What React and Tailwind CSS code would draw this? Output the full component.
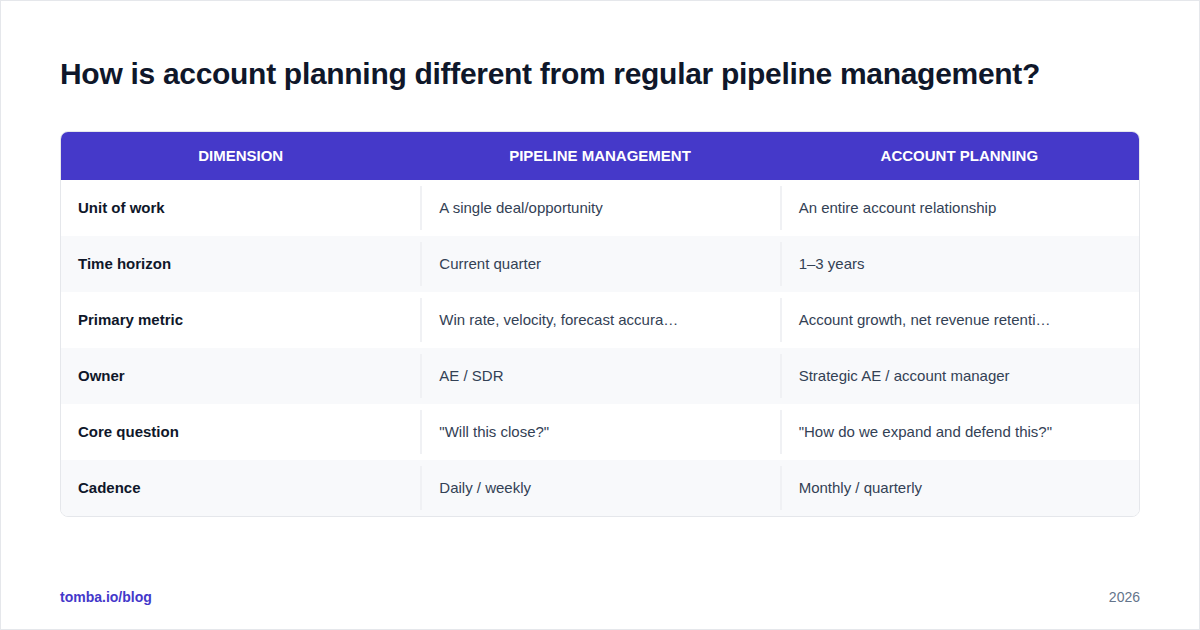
const rows = [
  ['Unit of work', 'A single deal/opportunity', 'An entire account relationship'],
  ['Time horizon', 'Current quarter', '1–3 years'],
  ['Primary metric', 'Win rate, velocity, forecast accura…', 'Account growth, net revenue retenti…'],
  ['Owner', 'AE / SDR', 'Strategic AE / account manager'],
  ['Core question', '"Will this close?"', '"How do we expand and defend this?"'],
  ['Cadence', 'Daily / weekly', 'Monthly / quarterly'],
];

export default function App() {
  return (
    <div
      className="w-[1200px] h-[630px] bg-white border border-[#e5e7eb] flex flex-col px-[59px] pt-[55px] pb-[21px]"
      style={{ fontFamily: '"Liberation Sans", Arial, sans-serif' }}
    >
      <h1 className="text-[30px] leading-[36px] font-bold text-[#0f172a] tracking-[-0.3px]">
        How is account planning different from regular pipeline management?
      </h1>
      <div className="mt-[39px] rounded-lg border border-[#e5e7eb] overflow-hidden">
        <div className="grid grid-cols-3 h-[48px] bg-[#4539c9] text-white text-[15px] font-bold uppercase">
          <div className="flex items-center justify-center">Dimension</div>
          <div className="flex items-center justify-center">Pipeline Management</div>
          <div className="flex items-center justify-center">Account Planning</div>
        </div>
        {rows.map((r, i) => (
          <div key={i} className={`grid grid-cols-3 h-[56px] items-center text-[15px] ${i % 2 ? 'bg-[#f8f9fb]' : 'bg-white'}`}>
            <div className="px-[17px] font-bold text-[#0f172a]">{r[0]}</div>
            <div className="px-[17px] h-[44px] flex items-center border-l-2 border-[#f0f1f4] text-[#334155]">{r[1]}</div>
            <div className="px-[17px] h-[44px] flex items-center border-l-2 border-[#f0f1f4] text-[#334155]">{r[2]}</div>
          </div>
        ))}
      </div>
      <div className="mt-auto flex justify-between items-center text-[14px]">
        <span className="font-bold text-[#4338ca]">tomba.io/blog</span>
        <span className="text-[#64748b]">2026</span>
      </div>
    </div>
  );
}
